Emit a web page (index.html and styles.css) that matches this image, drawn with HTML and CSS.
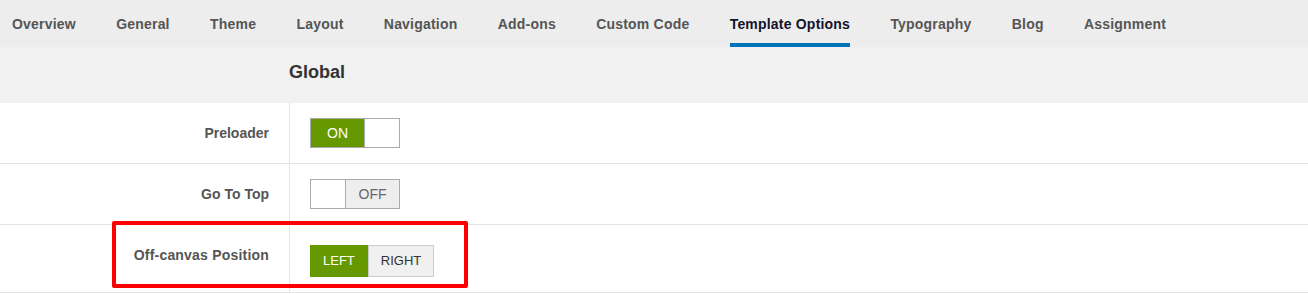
FILE: index.html
```html
<!DOCTYPE html>
<html lang="en">

<head>
    <meta charset="UTF-8">
    <meta name="viewport" content="width=device-width, initial-scale=1.0">
    <title>Template Options</title>
    <link rel="stylesheet" href="styles.css">
</head>

<body>

    <div class="tabs">
        <a href="javascript:;" class="tab">Overview</a>
        <a href="javascript:;" class="tab">General</a>
        <a href="javascript:;" class="tab">Theme</a>
        <a href="javascript:;" class="tab">Layout</a>
        <a href="javascript:;" class="tab">Navigation</a>
        <a href="javascript:;" class="tab">Add-ons</a>
        <a href="javascript:;" class="tab">Custom Code</a>
        <a href="javascript:;" class="tab active">Template Options</a>
        <a href="javascript:;" class="tab">Typography</a>
        <a href="javascript:;" class="tab">Blog</a>
        <a href="javascript:;" class="tab">Assignment</a>
    </div>

    <div class="section-head">Global</div>

    <div class="row">
        <div class="label">Preloader</div>
        <div class="control">
            <div class="switch">
                <span class="switch-on">ON</span>
                <span class="switch-blank"></span>
            </div>
        </div>
    </div>

    <div class="row">
        <div class="label">Go To Top</div>
        <div class="control">
            <div class="switch">
                <span class="switch-blank"></span>
                <span class="switch-off">OFF</span>
            </div>
        </div>
    </div>

    <div class="row row-tall">
        <div class="label wide">Off-canvas Position</div>
        <div class="control">
            <div class="btn-group">
                <span class="btn selected">LEFT</span>
                <span class="btn">RIGHT</span>
            </div>
        </div>
        <div class="highlight"></div>
    </div>

</body>

</html>
```

FILE: styles.css
```css
/* reset START */
* {
    margin: 0;
    padding: 0;
    box-sizing: border-box;
}

body {
    font-family: "Liberation Sans", Arial, sans-serif;
    background-color: #ffffff;
}

a {
    text-decoration: none;
}

/* reset END */

/* tabs START */
.tabs {
    display: flex;
    gap: 40.3px;
    height: 47px;
    padding-left: 12px;
    background-color: #ededed;
}

.tab {
    display: block;
    height: 47px;
    padding-top: 15px;
    line-height: 18px;
    font-size: 14px;
    font-weight: bold;
    letter-spacing: 0.2px;
    color: #555555;
    border-bottom: 4px solid transparent;
}

.tab.active {
    color: #14142a;
    border-bottom-color: #0073b9;
}

/* tabs END */

/* section head START */
.section-head {
    height: 56px;
    padding: 15px 0 20px 289px;
    line-height: 21px;
    font-size: 18px;
    font-weight: bold;
    color: #333333;
    background-color: #f1f1f1;
}

/* section head END */

/* rows START */
.row {
    display: flex;
    border-bottom: 1px solid #e5e5e5;
}

.row-tall {
    position: relative;
}

.label {
    width: 290px;
    flex-shrink: 0;
    padding: 22px 20px 0 0;
    line-height: 17px;
    text-align: right;
    font-size: 14px;
    font-weight: bold;
    color: #555555;
    border-right: 1px solid #e5e5e5;
}

.label.wide {
    letter-spacing: 0.2px;
}

.control {
    padding: 15px 20px;
}

.row-tall .control {
    padding: 20px 20px 15px;
}

/* rows END */

/* switch START */
.switch {
    display: flex;
    width: 90px;
    height: 30px;
    border: 1px solid #aaaaaa;
    font-size: 14px;
    line-height: 28px;
    text-align: center;
}

.switch-on {
    width: 54px;
    color: #ffffff;
    background-color: #669900;
    border-right: 1px solid #aaaaaa;
}

.switch-blank {
    flex: 1;
    background-color: #ffffff;
}

.switch-off {
    width: 54px;
    color: #666666;
    background-color: #eeeeee;
    border-left: 1px solid #aaaaaa;
}

/* switch END */

/* button group START */
.btn-group {
    display: flex;
}

.btn {
    display: inline-block;
    height: 32px;
    padding: 0 12px;
    line-height: 30px;
    font-size: 13px;
    color: #333333;
    background-color: #f0f0f0;
    border: 1px solid #cccccc;
}

.btn.selected {
    color: #ffffff;
    background-color: #669900;
    border-color: #669900;
}

/* button group END */

/* highlight START */
.highlight {
    position: absolute;
    left: 112px;
    top: -4px;
    width: 356px;
    height: 67px;
    border: 4px solid #ff0000;
    border-radius: 2px;
}

/* highlight END */
```
